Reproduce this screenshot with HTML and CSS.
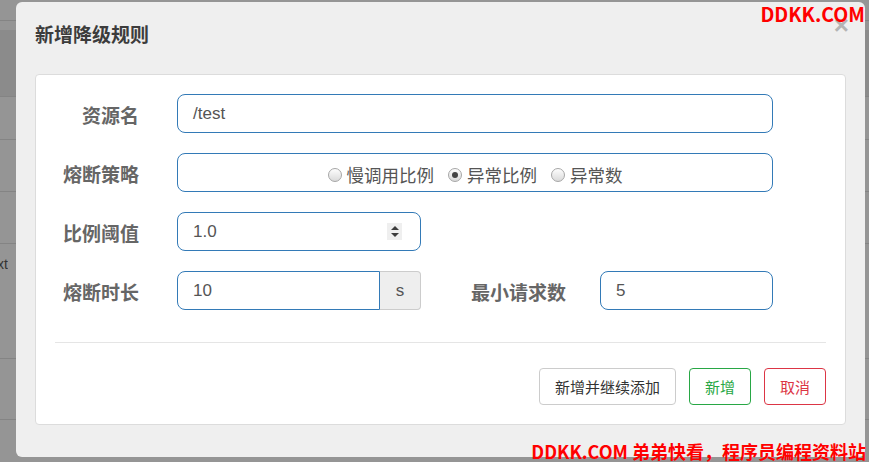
FILE: index.html
```html
<!DOCTYPE html>
<html lang="zh-CN">
<head>
    <meta charset="utf-8">
    <title>新增降级规则</title>
    <link rel="stylesheet" href="styles.css">
</head>
<body>
<div class="page">
    <div class="page-row h20"></div>
    <div class="page-row h9 no-line"></div>
    <div class="page-row band"></div>
    <div class="page-row h42"></div>
    <div class="page-row h51"></div>
    <div class="page-row h51"></div>
    <div class="page-row h114"><span class="cell-text">context</span></div>
    <div class="page-row h60"></div>
</div>

<div class="modal">
    <div class="modal-header">
        <h4 class="modal-title">新增降级规则</h4>
        <span class="close">&times;</span>
    </div>
    <div class="card">
        <div class="form-row">
            <label class="form-label">资源名</label>
            <div class="field field-full">/test</div>
        </div>
        <div class="form-row">
            <label class="form-label">熔断策略</label>
            <div class="field field-full radios">
                <span class="radio"><i class="dot"></i>慢调用比例</span>
                <span class="radio"><i class="dot checked"></i>异常比例</span>
                <span class="radio"><i class="dot"></i>异常数</span>
            </div>
        </div>
        <div class="form-row">
            <label class="form-label">比例阈值</label>
            <div class="field field-half">
                <span class="field-text">1.0</span>
                <span class="spinner">
                    <i class="up"></i>
                    <i class="down"></i>
                </span>
            </div>
        </div>
        <div class="form-row">
            <label class="form-label">熔断时长</label>
            <div class="input-group">
                <div class="field field-group">10</div>
                <span class="addon">s</span>
            </div>
            <label class="form-label label-wide">最小请求数</label>
            <div class="field field-small">5</div>
        </div>
        <hr>
        <div class="actions">
            <button class="btn btn-default">新增并继续添加</button>
            <button class="btn btn-success">新增</button>
            <button class="btn btn-danger">取消</button>
        </div>
    </div>
</div>

<div class="mark mark-top">DDKK.COM</div>
<div class="mark mark-bottom">DDKK.COM 弟弟快看，程序员编程资料站</div>
</body>
</html>
```

FILE: styles.css
```css
body{
    margin: 0;
    width: 869px;
    height: 462px;
    overflow: hidden;
    background-color: #959595;
    font-family: "Liberation Sans", "Noto Sans CJK SC", sans-serif;
    position: relative;
}
.page-row{
    border-bottom: 1px solid #848484;
}
.page-row.no-line{
    border-bottom: none;
}
.h20{ height: 20px; }
.h9{ height: 9px; }
.band{
    height: 66px;
    background-color: #8b8b8b;
}
.h42{ height: 42px; }
.h51{ height: 51px; }
.h114{ height: 114px; }
.h60{ height: 60px; }
.cell-text{
    display: block;
    width: 8px;
    overflow: hidden;
    direction: rtl;
    padding-top: 12px;
    font-size: 14px;
    color: #333;
}

.modal{
    position: absolute;
    left: 16px;
    top: 2px;
    width: 849px;
    box-sizing: border-box;
    padding: 0 19px 32px;
    background-color: #efefef;
    border-radius: 6px;
}
.modal-header{
    position: relative;
    padding-top: 20px;
    height: 24px;
    margin-bottom: 28px;
}
.modal-title{
    margin: 0;
    font-family: "Noto Sans CJK SC", sans-serif;
    font-size: 19px;
    line-height: 24px;
    font-weight: bold;
    color: #3c3c3c;
}
.close{
    position: absolute;
    right: -3px;
    top: 10px;
    font-size: 26px;
    line-height: 26px;
    font-weight: bold;
    color: #b4b4b4;
}

.card{
    background-color: #fff;
    border: 1px solid #dcdcdc;
    border-radius: 4px;
    padding: 19px 19px 19px;
}
.form-row{
    display: flex;
    align-items: center;
    height: 39px;
    margin-bottom: 20px;
}
.form-row:nth-child(4){
    margin-bottom: 0;
}
.form-label{
    width: 84px;
    margin-right: 38px;
    flex-shrink: 0;
    text-align: right;
    font-family: "Noto Sans CJK SC", sans-serif;
    font-size: 19px;
    font-weight: bold;
    color: #666;
    line-height: 24px;
    padding-top: 3px;
    white-space: nowrap;
}
.label-wide{
    width: 96px;
    margin-left: 49px;
    margin-right: 34px;
}
.field{
    box-sizing: border-box;
    height: 39px;
    border: 1px solid #337ab7;
    border-radius: 8px;
    padding-left: 15px;
    font-size: 17px;
    line-height: 37px;
    color: #555;
    background-color: #fff;
}
.field-full{
    width: 596px;
}
.field-half{
    width: 244px;
    display: flex;
    align-items: center;
}
.field-small{
    width: 173px;
}
.field-text{
    flex: 1;
}
.spinner{
    display: flex;
    flex-direction: column;
    align-items: center;
    justify-content: center;
    gap: 3px;
    width: 15px;
    height: 17px;
    margin-right: 18px;
    background-color: #efefef;
}
.spinner .up{
    border-left: 4px solid transparent;
    border-right: 4px solid transparent;
    border-bottom: 4px solid #3c3c3c;
}
.spinner .down{
    border-left: 4px solid transparent;
    border-right: 4px solid transparent;
    border-top: 4px solid #3c3c3c;
}
.input-group{
    display: flex;
}
.field-group{
    width: 203px;
    border-radius: 8px 0 0 8px;
}
.addon{
    box-sizing: border-box;
    width: 41px;
    height: 39px;
    border: 1px solid #ccc;
    border-left: none;
    border-radius: 0 4px 4px 0;
    background-color: #eee;
    text-align: center;
    font-size: 17px;
    line-height: 37px;
    color: #555;
}

.radios{
    display: flex;
    justify-content: center;
    align-items: center;
    padding: 4px 0 0;
    font-family: "Noto Sans CJK SC", sans-serif;
    font-size: 17.5px;
}
.radio{
    display: flex;
    align-items: center;
    margin: 0 7px;
    line-height: 24px;
}
.dot{
    box-sizing: border-box;
    width: 14px;
    height: 14px;
    margin-right: 5px;
    border: 1px solid #a6a6a6;
    border-radius: 50%;
    background: linear-gradient(#fdfdfd, #dadada);
    position: relative;
}
.dot.checked::after{
    content: "";
    position: absolute;
    left: 3px;
    top: 3px;
    width: 6px;
    height: 6px;
    border-radius: 50%;
    background-color: #444;
}

hr{
    border: none;
    border-top: 1px solid #e5e5e5;
    margin: 32px 0 25px;
}
.actions{
    display: flex;
    justify-content: flex-end;
    gap: 13px;
}
.btn{
    height: 37px;
    padding: 0 15px;
    background-color: #fff;
    border: 1px solid #ccc;
    border-radius: 4px;
    font-family: "Noto Sans CJK SC", sans-serif;
    font-size: 15px;
    color: #333;
}
.btn-success{
    border-color: #28a745;
    color: #28a745;
}
.btn-danger{
    border-color: #dc3545;
    color: #dc3545;
}

.mark{
    position: absolute;
    right: 3px;
    color: #ff0000;
    font-family: "Noto Sans CJK SC", sans-serif;
    font-weight: bold;
    white-space: nowrap;
}
.mark-top{
    top: 0;
    right: 4px;
    font-size: 19.5px;
    line-height: 28px;
}
.mark-bottom{
    bottom: -2px;
    font-size: 18px;
    line-height: 26px;
}
```
